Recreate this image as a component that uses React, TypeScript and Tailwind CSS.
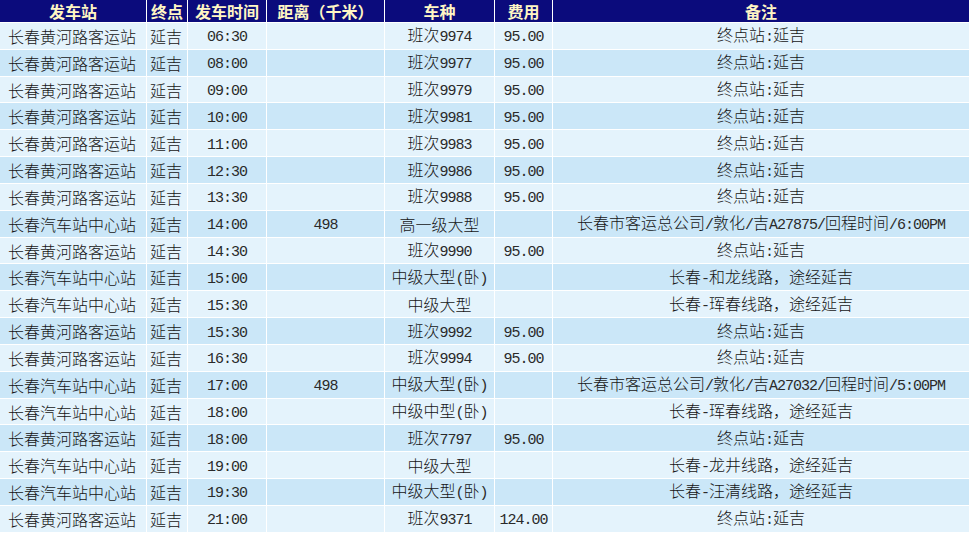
import React from "react";

type Row = [string, string, string, string, string, string, string];

const H = "长春黄河路客运站";
const Q = "长春汽车站中心站";
const Z = "终点站:延吉";

const rows: Row[] = [
  [H, "延吉", "06:30", "", "班次9974", "95.00", Z],
  [H, "延吉", "08:00", "", "班次9977", "95.00", Z],
  [H, "延吉", "09:00", "", "班次9979", "95.00", Z],
  [H, "延吉", "10:00", "", "班次9981", "95.00", Z],
  [H, "延吉", "11:00", "", "班次9983", "95.00", Z],
  [H, "延吉", "12:30", "", "班次9986", "95.00", Z],
  [H, "延吉", "13:30", "", "班次9988", "95.00", Z],
  [Q, "延吉", "14:00", "498", "高一级大型", "", "长春市客运总公司/敦化/吉A27875/回程时间/6:00PM"],
  [H, "延吉", "14:30", "", "班次9990", "95.00", Z],
  [Q, "延吉", "15:00", "", "中级大型(卧)", "", "长春-和龙线路，途经延吉"],
  [Q, "延吉", "15:30", "", "中级大型", "", "长春-珲春线路，途经延吉"],
  [H, "延吉", "15:30", "", "班次9992", "95.00", Z],
  [H, "延吉", "16:30", "", "班次9994", "95.00", Z],
  [Q, "延吉", "17:00", "498", "中级大型(卧)", "", "长春市客运总公司/敦化/吉A27032/回程时间/5:00PM"],
  [Q, "延吉", "18:00", "", "中级中型(卧)", "", "长春-珲春线路，途经延吉"],
  [H, "延吉", "18:00", "", "班次7797", "95.00", Z],
  [Q, "延吉", "19:00", "", "中级大型", "", "长春-龙井线路，途经延吉"],
  [Q, "延吉", "19:30", "", "中级大型(卧)", "", "长春-汪清线路，途经延吉"],
  [H, "延吉", "21:00", "", "班次9371", "124.00", Z],
];

const headers = ["发车站", "终点", "发车时间", "距离（千米）", "车种", "费用", "备注"];

function Mixed({ text }: { text: string }) {
  const parts = text.match(/[\x00-\x7F]+|[^\x00-\x7F]+/g) || [];
  return (
    <span className="whitespace-nowrap">
      {parts.map((p, i) =>
        /^[\x00-\x7F]+$/.test(p) ? (
          <span
            key={i}
            className="text-[15px] tracking-[-1px] text-[#2a2a2a] [font-family:'Liberation_Mono',monospace]"
          >
            {p}
          </span>
        ) : (
          <span key={i} className="text-[16px] font-light">
            {p}
          </span>
        )
      )}
    </span>
  );
}

const align = [
  "justify-start pl-[8px]",
  "justify-start pl-[3px]",
  "justify-center",
  "justify-center",
  "justify-center",
  "justify-center",
  "justify-center",
];

export default function App() {
  return (
    <div className="w-[969px] h-[533px] overflow-hidden bg-white [font-family:'Noto_Sans_CJK_SC','Noto_Sans',sans-serif] text-[#151515]">
      <div className="grid grid-cols-[146px_40px_78px_117px_109px_57px_416px] gap-px bg-white">
        {headers.map((h) => (
          <div
            key={h}
            className="h-[22px] bg-[#0b0b7c] text-[#fff6c4] font-bold text-[16px] leading-none flex items-center justify-center whitespace-nowrap"
          >
            {h}
          </div>
        ))}
        {rows.map((r, ri) =>
          r.map((c, ci) => (
            <div
              key={ri + "-" + ci}
              className={
                "h-[25.84px] flex items-center leading-none " +
                align[ci] +
                " " +
                (ri % 2 === 1 ? "bg-[#cbe7f8]" : "bg-[#e4f3fc]")
              }
            >
              {c ? <Mixed text={c} /> : null}
            </div>
          ))
        )}
      </div>
    </div>
  );
}
